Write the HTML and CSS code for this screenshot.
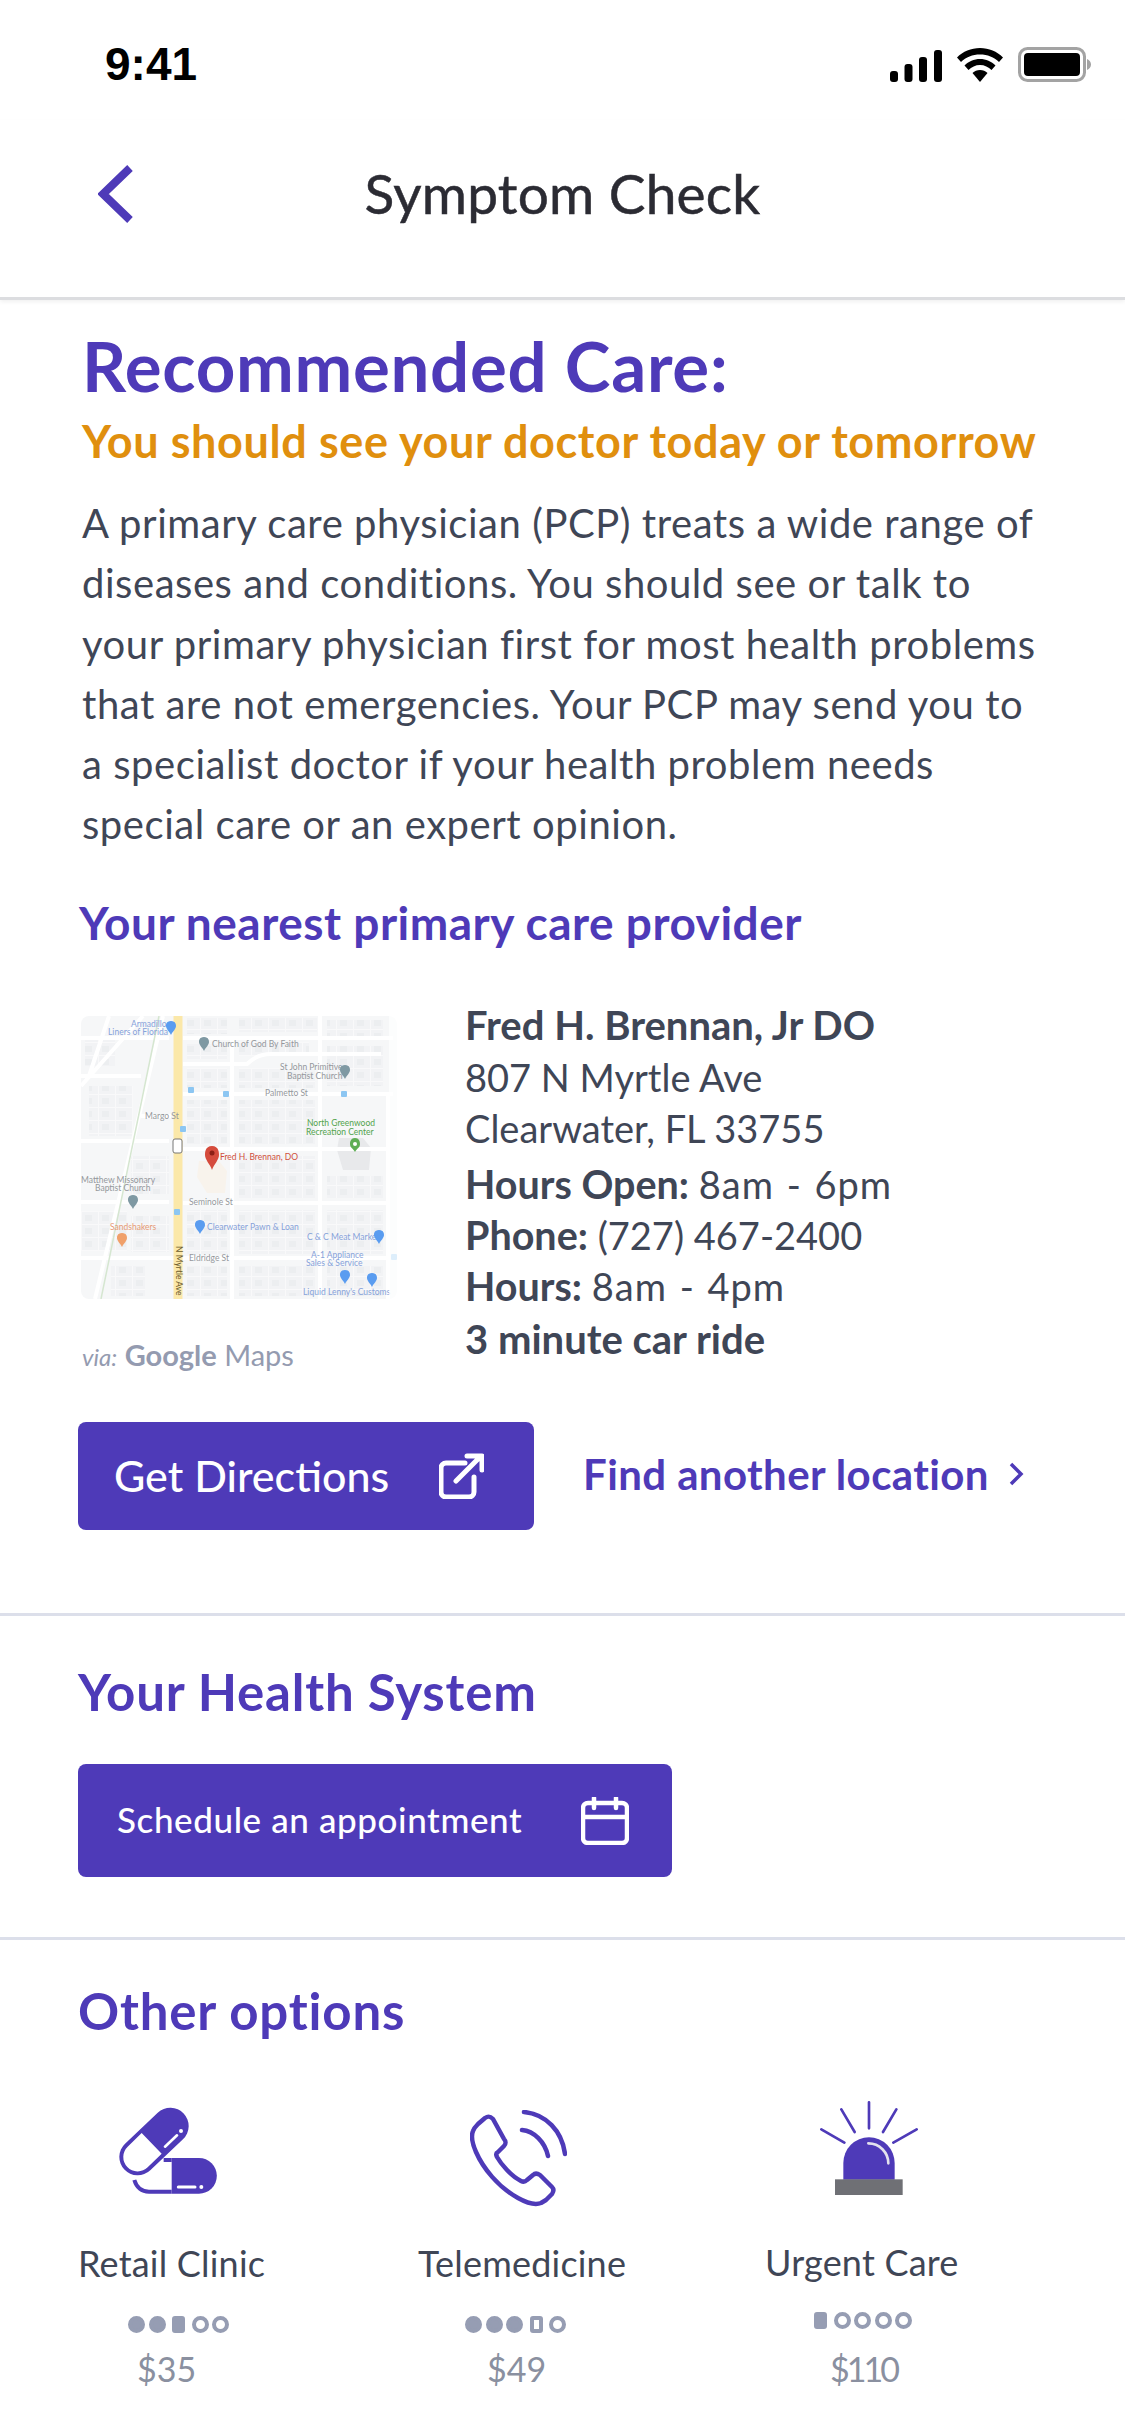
FILE: index.html
```html
<!DOCTYPE html>
<html lang="en">
<head>
    <meta charset="UTF-8">
    <meta name="viewport" content="width=device-width, initial-scale=1.0">
    <title>Symptom Check</title>
    <link rel="stylesheet" href="styles.css">
</head>
<body>
    <div class="status-bar">
        <span class="status-time">9:41</span>
        <div class="status-icons">
            <svg class="icon-cell" viewBox="0 0 52 32"><rect x="0" y="21" width="8" height="11" rx="3"/><rect x="14.500" y="14" width="8" height="18" rx="3"/><rect x="29" y="7" width="8" height="25" rx="3"/><rect x="44" y="0" width="8" height="32" rx="3"/></svg>
            <svg class="icon-wifi" viewBox="0 0 46 34"><path d="M23 0C14 0 6 3.500 0 9.500l4 4.500C9 9 15.500 6.500 23 6.500S37 9 42 14l4-4.500C40 3.500 32 0 23 0z"/><path d="M23 11c-6 0-11.500 2.500-15.500 6.500l4 4.500c3-3 7-5 11.500-5s8.500 2 11.500 5l4-4.500C34.500 13.500 29 11 23 11z"/><path d="M23 22c-3 0-5.500 1-7.500 3L23 34l7.500-9c-2-2-4.500-3-7.500-3z"/></svg>
            <svg class="icon-battery" viewBox="0 0 73 35"><rect x="1.500" y="1.500" width="65" height="32" rx="8" fill="none" stroke="#a3a3a3" stroke-width="3"/><rect x="6" y="6" width="56" height="23" rx="4"/><path d="M69 12c2.500 1 4 3 4 5.500S71.500 22 69 23z" fill="#a3a3a3"/></svg>
        </div>
    </div>

    <header class="nav-bar">
        <svg class="nav-back" viewBox="0 0 35 58"><path d="M32 3 5 29l27 26" fill="none" stroke="#4e3ab8" stroke-width="8"/></svg>
        <h1 class="nav-title">Symptom Check</h1>
    </header>

    <section class="care">
        <h2 class="care-title">Recommended Care:</h2>
        <p class="care-sub">You should see your doctor today or tomorrow</p>
        <p class="care-text">A primary care physician (PCP) treats a wide range of<br>diseases and conditions. You should see or talk to<br>your primary physician first for most health problems<br>that are not emergencies. Your PCP may send you to<br>a specialist doctor if your health problem needs<br>special care or an expert opinion.</p>
        <h3 class="care-heading">Your nearest primary care provider</h3>

        <div class="provider">
            <div class="provider-map">
                <svg class="map" viewBox="0 0 316 283">
                    <defs>
                        <pattern id="lots" width="17" height="13" patternUnits="userSpaceOnUse">
                            <rect width="17" height="13" fill="#f2f3f5"/>
                            <path d="M0 .5h17M.5 0v13" stroke="#f9f9fa" stroke-width="1"/>
                            <rect x="4" y="4" width="7" height="6" fill="#eceef0"/>
                        </pattern>
                    </defs>
                    <rect width="316" height="283" rx="8" fill="#f6f7f8"/>
                    <g fill="url(#lots)">
                        <rect x="106" y="2" width="40" height="16"/><rect x="158" y="2" width="78" height="14"/>
                        <rect x="106" y="28" width="40" height="15"/><rect x="158" y="26" width="70" height="14"/><rect x="246" y="4" width="56" height="20"/>
                        <rect x="106" y="52" width="40" height="20"/><rect x="158" y="52" width="76" height="20"/><rect x="246" y="30" width="56" height="40"/>
                        <rect x="106" y="84" width="40" height="44"/><rect x="158" y="84" width="76" height="44"/>
                        <rect x="158" y="140" width="76" height="42"/><rect x="246" y="160" width="56" height="22"/>
                        <rect x="106" y="194" width="40" height="44"/><rect x="158" y="194" width="76" height="44"/><rect x="246" y="194" width="56" height="44"/>
                        <rect x="106" y="250" width="40" height="30"/><rect x="158" y="250" width="76" height="30"/><rect x="246" y="250" width="56" height="30"/>
                        <rect x="8" y="70" width="44" height="50"/><rect x="50" y="140" width="38" height="38"/><rect x="0" y="195" width="46" height="40"/><rect x="50" y="200" width="38" height="36"/><rect x="30" y="250" width="34" height="30"/><rect x="4" y="20" width="30" height="30"/>
                    </g>
                    <path d="M258 122h24l8 10-2 22h-26l-6-20z" fill="#e8e9eb"/>
                    <path d="M118 145h20l8 10-2 22h-18l-10-16z" fill="#f8f3ec"/>
                    <g stroke="#fff" fill="none" stroke-width="4">
                        <path d="M0 22h88M102 22h210M102 48h64q10-10 24-10h110M0 60h60M102 78h210M60 100h30M0 125h88M102 133h204M0 186h88M102 187h205M0 242h306"/>
                        <path d="M151 20v263M239 0v283M307 78v205M82 0 14 283M62 0 0 70M28 0 8 60"/>
                    </g>
                    <path d="M78 0 20 283" stroke="#d5e6d0" stroke-width="1.500" fill="none"/>
                    <path d="M97 0v283" stroke="#fbe8a9" stroke-width="9"/>
                    <g class="map-label map-label--grey">
                        <text x="131" y="31">Church of God By Faith</text>
                        <text x="199" y="54">St John Primitive</text>
                        <text x="206" y="63">Baptist Church</text>
                        <text x="184" y="80">Palmetto St</text>
                        <text x="64" y="103">Margo St</text>
                        <text x="0" y="167">Matthew Missonary</text>
                        <text x="14" y="175">Baptist Church</text>
                        <text x="108" y="189" font-size="6">Seminole St</text>
                        <text x="108" y="245" font-size="6">Eldridge St</text>
                    </g>
                    <g class="map-label map-label--blue">
                        <text x="50" y="11">Armadillo</text>
                        <text x="27" y="19">Liners of Florida</text>
                        <text x="126" y="214">Clearwater Pawn &amp; Loan</text>
                        <text x="226" y="224">C &amp; C Meat Market</text>
                        <text x="230" y="242">A-1 Appliance</text>
                        <text x="225" y="250">Sales &amp; Service</text>
                        <text x="222" y="279">Liquid Lenny's Customs</text>
                    </g>
                    <g class="map-label">
                        <text x="226" y="110" fill="#52a34c">North Greenwood</text>
                        <text x="225" y="119" fill="#52a34c">Recreation Center</text>
                        <text x="139" y="144" fill="#d0503c">Fred H. Brennan, DO</text>
                        <text x="29" y="214" fill="#e79a74">Sandshakers</text>
                        <text x="95" y="230" font-size="6.500" transform="rotate(90 95 230)" fill="#6b5b2e">N Myrtle Ave</text>
                    </g>
                    <path d="M131 130c-7 0-7 7-7 9 0 5 5 9 7 15 2-6 7-10 7-15 0-2 0-9-7-9z" fill="#d54b3c"/><circle cx="131" cy="137" r="2.500" fill="#8c1f15"/>
                    <path d="M274 122c-5 0-5 5-5 6 0 4 3 4 5 8 2-4 5-4 5-8 0-1 0-6-5-6z" fill="#5fae55"/><circle cx="274" cy="128" r="2" fill="#fff"/>
                    <path d="M123 21c-5 0-5 4-5 5 0 3 3 5 5 9 2-4 5-6 5-9 0-1 0-5-5-5zM52 179c-5 0-5 4-5 5 0 3 3 5 5 9 2-4 5-6 5-9 0-1 0-5-5-5zM264 49c-5 0-5 4-5 5 0 3 3 5 5 9 2-4 5-6 5-9 0-1 0-5-5-5z" fill="#7f99a3"/>
                    <path d="M90 5c-5 0-5 4-5 5 0 3 3 5 5 9 2-4 5-6 5-9 0-1 0-5-5-5zM119 204c-5 0-5 4-5 5 0 3 3 5 5 9 2-4 5-6 5-9 0-1 0-5-5-5zM298 214c-5 0-5 4-5 5 0 3 3 5 5 9 2-4 5-6 5-9 0-1 0-5-5-5zM264 254c-5 0-5 4-5 5 0 3 3 5 5 9 2-4 5-6 5-9 0-1 0-5-5-5zM291 257c-5 0-5 4-5 5 0 3 3 5 5 9 2-4 5-6 5-9 0-1 0-5-5-5z" fill="#5a9cf0"/>
                    <path d="M41 217c-5 0-5 4-5 5 0 3 3 5 5 9 2-4 5-6 5-9 0-1 0-5-5-5z" fill="#f0a06a"/>
                    <g fill="#8cc6f2"><rect x="107" y="71" width="6" height="6" rx="1"/><rect x="142" y="75" width="6" height="6" rx="1"/><rect x="260" y="75" width="6" height="6" rx="1"/><rect x="99" y="110" width="6" height="6" rx="1"/><rect x="93" y="193" width="6" height="6" rx="1"/><rect x="310" y="238" width="6" height="6" rx="1"/></g>
                    <rect x="92" y="123" width="9" height="14" rx="2" fill="#fff" stroke="#777" stroke-width="1"/>
                    <rect x="308" width="8" height="283" fill="#fff" opacity=".7"/>
                </svg>
                <p class="map-credit"><em>via:</em> <b>Google</b> Maps</p>
            </div>
            <div class="provider-info">
                <p class="provider-name"><b>Fred H. Brennan, Jr DO</b></p>
                <p class="provider-addr">807 N Myrtle Ave</p>
                <p class="provider-addr">Clearwater, FL 33755</p>
                <p class="provider-line provider-line-first"><b>Hours Open:</b> <span class="provider-hours">8am - 6pm</span></p>
                <p class="provider-line"><b>Phone:</b> (727) 467-2400</p>
                <p class="provider-line"><b>Hours:</b> <span class="provider-hours">8am - 4pm</span></p>
                <p class="provider-ride"><b>3 minute car ride</b></p>
            </div>
        </div>

        <div class="actions">
            <button class="btn btn-directions">Get Directions
                <svg class="btn-icon-ext" viewBox="0 0 45 46" fill="none" stroke="#fff" stroke-width="5" stroke-linecap="round" stroke-linejoin="round"><path d="M26 10H7a5 5 0 0 0-5 5v24a5 5 0 0 0 5 5h23a5 5 0 0 0 5-5V24"/><path d="M17 28 41 4M28 3h15v14"/></svg>
            </button>
            <a class="link-location">Find another location
                <svg class="link-chev" viewBox="0 0 16 24" fill="none" stroke="#4e3ab8" stroke-width="3.500"><path d="M3 2l10 10L3 22"/></svg>
            </a>
        </div>
    </section>

    <section class="health">
        <h2 class="section-title">Your Health System</h2>
        <button class="btn btn-schedule">Schedule an appointment
            <svg class="btn-icon-cal" viewBox="0 0 48 48" fill="none" stroke="#fff" stroke-width="4.500" stroke-linecap="round"><rect x="2" y="6" width="44" height="40" rx="5"/><path d="M2 20h44M13 1v10M35 1v10"/></svg>
        </button>
    </section>

    <section class="options">
        <h2 class="section-title">Other options</h2>
        <div class="option-row">
            <div class="option option-clinic">
                <svg class="option-icon" viewBox="170 85 300 270">
                    <path d="M222 310c6 20 20 35 44 35h68M310 250h24" fill="none" stroke="#4e3ab8" stroke-width="12"/>
                    <path d="M334 244h82a53 53 0 0 1 0 107h-82z" fill="#4e3ab8"/>
                    <path d="M354 331h50" stroke="#fff" stroke-width="9" stroke-linecap="round"/><circle cx="423" cy="331" r="6" fill="#fff"/>
                    <path d="M232 241 330 148" stroke="#4e3ab8" stroke-width="110" stroke-linecap="round"/>
                    <path d="M244 169 202 210A43 43 0 0 0 262 272L304 231z" fill="#fff"/>
                    <path d="M314 210l36-34" stroke="#fff" stroke-width="8" stroke-linecap="round"/><circle cx="362" cy="163" r="6" fill="#fff"/>
                </svg>
                <p class="option-name">Retail Clinic</p>
                <div class="dots"><i class="dot on"></i><i class="dot on"></i><i class="dot on half"></i><i class="dot"></i><i class="dot"></i></div>
                <p class="option-price">$35</p>
            </div>
            <div class="option option-tele">
                <svg class="option-icon" viewBox="0 0 97 97" fill="none" stroke="#4e3ab8" stroke-width="4.500" stroke-linecap="round" stroke-linejoin="round">
                    <path d="M3 21c-2 5-1 12 3 21 7 16 22 35 42 46 9 5 18 7 23 5l5-3 6-6c2-3 2-5 0-7l-12-12c-3-2-5-2-7 0l-6 5c-2 2-4 2-6 1-10-5-20-17-24-24-1-2-1-4 1-5l6-6c2-2 2-5 0-7L23 9c-3-3-5-3-8-1l-7 6c-2 2-4 4-5 7z"/>
                    <path d="M52 20c12 1 23 12 26 26M54 2c22 2 38 19 41 42"/>
                </svg>
                <p class="option-name">Telemedicine</p>
                <div class="dots"><i class="dot on"></i><i class="dot on"></i><i class="dot on"></i><i class="dot half"></i><i class="dot"></i></div>
                <p class="option-price">$49</p>
            </div>
            <div class="option option-urgent">
                <svg class="option-icon" viewBox="778 60 294 282">
                    <g stroke="#4e3ab8" stroke-width="8" stroke-linecap="round"><path d="M925 64v78M842 85l40 68M1007 85l-40 68M782 145l69 40M1068 145l-70 40"/></g>
                    <path d="M848 296v-50a77 77 0 0 1 154 0v50z" fill="#4e3ab8"/>
                    <path d="M923 187a60 60 0 0 1 60 60" fill="none" stroke="#e4e2ee" stroke-width="8" stroke-linecap="round"/>
                    <rect x="823" y="295" width="203" height="47" fill="#6f7075"/>
                </svg>
                <p class="option-name">Urgent Care</p>
                <div class="dots"><i class="dot on half"></i><i class="dot"></i><i class="dot"></i><i class="dot"></i><i class="dot"></i></div>
                <p class="option-price">$110</p>
            </div>
        </div>
    </section>
</body>
</html>
```

FILE: styles.css
```css
* {
    box-sizing: border-box;
}
html, body {
    margin: 0;
    padding: 0;
}
body {
    width: 1125px;
    height: 2432px;
    overflow: hidden;
    background-color: #fff;
    font-family: Lato, "Open Sans", sans-serif;
    color: #3f4656;
}
h1, h2, h3, p {
    margin: 0;
    font-weight: inherit;
}

/* status bar */
.status-bar {
    height: 120px;
    display: flex;
    justify-content: space-between;
    align-items: flex-start;
    padding: 38px 34px 0 105px;
}
.status-time {
    font-family: "Liberation Sans", sans-serif;
    font-weight: 700;
    font-size: 46px;
    line-height: 52px;
    color: #000;
}
.status-icons {
    display: flex;
    align-items: flex-start;
    gap: 15px;
    padding-top: 10px;
}
.icon-cell {
    width: 52px;
    height: 32px;
    margin-top: 2px;
}
.icon-wifi {
    width: 46px;
    height: 34px;
}
.icon-battery {
    width: 73px;
    height: 35px;
    margin-top: -1px;
}

/* nav */
.nav-bar {
    height: 180px;
    display: flex;
    align-items: center;
    justify-content: center;
    position: relative;
    border-bottom: 3px solid #dcdde0;
    box-shadow: 0 2px 4px rgba(0, 0, 0, .06);
    padding-bottom: 32px;
}
.nav-back {
    position: absolute;
    left: 98px;
    top: 45px;
    width: 35px;
    height: 58px;
}
.nav-title {
    font-size: 55px;
    letter-spacing: .2px;
    -webkit-text-stroke: .5px #2b2b33;
    color: #2b2b33;
}

/* recommended care */
.care {
    padding: 27px 40px 0 82px;
    height: 1316px;
    border-bottom: 3px solid #dcdfea;
}
.care-title {
    font-size: 69px;
    letter-spacing: .7px;
    line-height: 78px;
    font-weight: 700;
    color: #4e3ab8;
}
.care-sub {
    font-size: 45px;
    letter-spacing: .6px;
    line-height: 54px;
    margin-top: 9px;
    font-weight: 700;
    color: #e08f0e;
}
.care-text {
    font-size: 40px;
    letter-spacing: .55px;
    line-height: 60.3px;
    margin-top: 25px;
}
.care-heading {
    font-size: 46px;
    letter-spacing: .5px;
    line-height: 54px;
    margin: 41px 0 0 -3px;
    font-weight: 700;
    color: #4e3ab8;
}

/* provider */
.provider {
    display: flex;
    margin-top: 66px;
    height: 406px;
}
.provider-map {
    width: 383px;
    flex: none;
}
.map {
    display: block;
    margin-left: -1px;
    width: 316px;
    height: 283px;
}
.map-label text {
    font-size: 8.500px;
}
.map-label--grey text {
    fill: #94979c;
}
.map-label--blue text {
    fill: #86a2da;
}
.map-credit {
    margin-top: 38px;
    font-size: 29px;
    line-height: 36px;
    color: #949bb0;
}
.map-credit em {
    font-size: 24px;
}
.map-credit b {
    font-weight: 700;
}
.provider-info {
    font-size: 38px;
    line-height: 51px;
    margin-top: -18px;
}
.provider-info b {
    font-weight: 700;
}
.provider-line {
    height: 51px;
}
.provider-line b {
    font-size: 39.500px;
}
.provider-name {
    line-height: 54px;
    font-size: 40px;
}
.provider-line-first {
    margin-top: 4px;
}
.provider-hours {
    letter-spacing: 1px;
    word-spacing: 2px;
}
.provider-ride {
    line-height: 56px;
    font-size: 40px;
}

/* buttons */
.actions {
    display: flex;
    align-items: center;
    margin-left: -4px;
    gap: 49px;
}
.btn {
    display: flex;
    align-items: center;
    justify-content: space-between;
    border: none;
    border-radius: 8px;
    background-color: #4e3ab8;
    color: #fff;
    font-family: inherit;
    font-weight: 500;
}
.btn-directions {
    width: 456px;
    height: 108px;
    padding: 0 50px 0 36px;
    font-size: 43px;
}
.btn-icon-ext {
    width: 45px;
    height: 46px;
}
.link-location {
    display: flex;
    align-items: center;
    gap: 19px;
    margin-top: -4px;
    font-size: 42px;
    letter-spacing: .4px;
    font-weight: 700;
    color: #4e3ab8;
}
.link-chev {
    width: 16px;
    height: 24px;
}

/* health system and other options */
.section-title {
    font-size: 51px;
    letter-spacing: .8px;
    line-height: 60px;
    font-weight: 700;
    color: #4e3ab8;
}
.health {
    height: 324px;
    padding: 46px 0 0 78px;
    border-bottom: 3px solid #dcdfea;
}
.btn-schedule {
    width: 594px;
    height: 113px;
    margin-top: 42px;
    padding: 0 43px 3px 39px;
    font-size: 35px;
    letter-spacing: .6px;
}
.btn-icon-cal {
    width: 48px;
    height: 48px;
    margin-top: 3px;
}
.options {
    padding: 41px 0 0 78px;
}
.option-row {
    display: flex;
    margin-top: 55px;
}
.option {
    display: flex;
    flex-direction: column;
    align-items: flex-start;
}
.option-icon {
    display: block;
}
.option-name {
    font-size: 36px;
    letter-spacing: .2px;
    line-height: 40px;
}
.dots {
    display: flex;
    gap: 3.500px;
}
.dot {
    width: 17px;
    height: 17px;
    border-radius: 50%;
    border: 4px solid #969db3;
}
.dot.on {
    background-color: #969db3;
}
.dot.half {
    width: 13px;
    margin: 0 3px;
    border-radius: 3px;
}
.option-price {
    font-size: 34px;
    line-height: 40px;
    color: #8a90a0;
}

.option-clinic {
    width: 340px;
}
.option-clinic .option-icon {
    width: 100px;
    height: 90px;
    margin: 9px 0 0 39px;
}
.option-clinic .option-name {
    margin-top: 48px;
}
.option-clinic .dots {
    margin: 33px 0 0 50px;
}
.option-clinic .option-price {
    margin: 16px 0 0 59px;
}
.option-tele {
    width: 347px;
}
.option-tele .option-icon {
    width: 97px;
    height: 97px;
    margin: 14px 0 0 52px;
}
.option-tele .option-name {
    margin-top: 36px;
}
.option-tele .dots {
    margin: 33px 0 0 47px;
}
.option-tele .option-price {
    margin: 16px 0 0 69px;
}
.option-urgent .option-icon {
    width: 98px;
    height: 94px;
    margin: 5px 0 0 55px;
}
.option-urgent .option-name {
    margin-top: 47px;
}
.option-urgent .dots {
    margin: 30px 0 0 46px;
}
.option-urgent .option-price {
    margin: 20px 0 0 65px;
    letter-spacing: -3px;
}
```
